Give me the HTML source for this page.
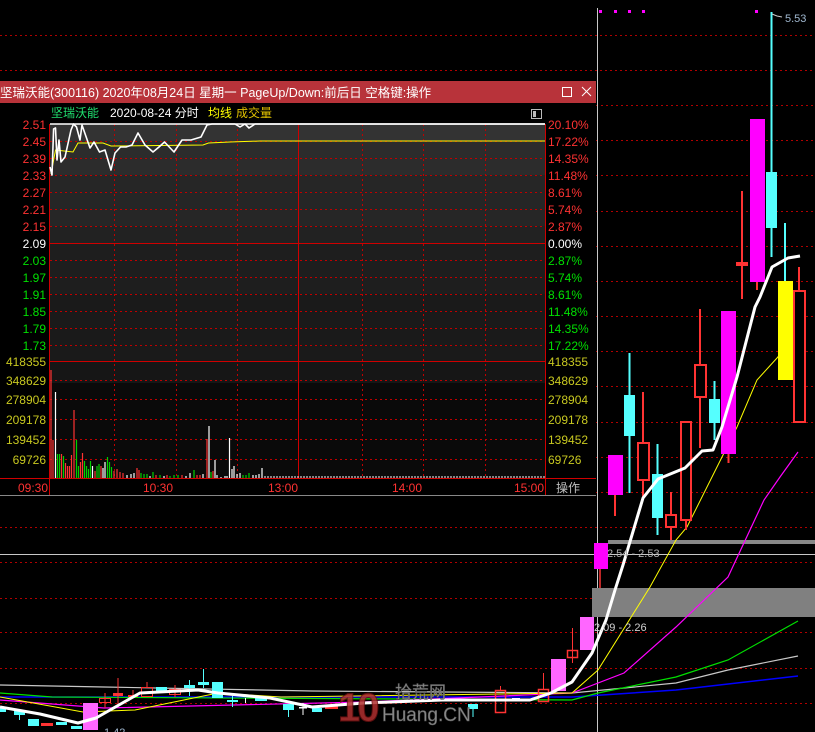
<!DOCTYPE html>
<html><head><meta charset="utf-8"><style>
html,body{margin:0;padding:0;background:#000;width:815px;height:732px;overflow:hidden}
svg{display:block}
text{font-family:"Liberation Sans","Noto Sans CJK SC",sans-serif}
</style></head><body>
<svg width="815" height="732" viewBox="0 0 815 732" xmlns="http://www.w3.org/2000/svg">
<rect width="815" height="732" fill="#000"/>
<g stroke="#b00000" stroke-width="1" stroke-dasharray="2,3">
<line x1="0" y1="35.5" x2="815" y2="35.5"/><line x1="0" y1="70.5" x2="815" y2="70.5"/>
<line x1="596" y1="105.5" x2="815" y2="105.5"/><line x1="596" y1="140.5" x2="815" y2="140.5"/>
<line x1="596" y1="175.5" x2="815" y2="175.5"/><line x1="596" y1="211.5" x2="815" y2="211.5"/>
<line x1="596" y1="246.5" x2="815" y2="246.5"/><line x1="596" y1="281.5" x2="815" y2="281.5"/>
<line x1="596" y1="316.5" x2="815" y2="316.5"/><line x1="596" y1="351.5" x2="815" y2="351.5"/>
<line x1="596" y1="386.5" x2="815" y2="386.5"/><line x1="596" y1="422.5" x2="815" y2="422.5"/>
<line x1="596" y1="457.5" x2="815" y2="457.5"/><line x1="596" y1="492.5" x2="815" y2="492.5"/>
<line x1="0" y1="527.5" x2="815" y2="527.5"/><line x1="0" y1="562.5" x2="815" y2="562.5"/>
<line x1="0" y1="598.5" x2="815" y2="598.5"/><line x1="0" y1="632.5" x2="815" y2="632.5"/>
<line x1="0" y1="668.5" x2="815" y2="668.5"/><line x1="0" y1="703.5" x2="815" y2="703.5"/>
</g>
<g fill="#ff00ff"><rect x="599" y="10" width="3" height="3"/><rect x="614" y="10" width="3" height="3"/><rect x="628" y="10" width="3" height="3"/><rect x="642" y="10" width="3" height="3"/><rect x="755" y="10" width="3" height="3"/></g>
<line x1="597.5" y1="8" x2="597.5" y2="732" stroke="#c8c8c8" stroke-width="1"/>
<rect x="608" y="540" width="207" height="4" fill="#888"/>
<line x1="0" y1="554.5" x2="815" y2="554.5" stroke="#c8c8c8"/>
<rect x="592" y="588" width="223" height="29" fill="#808080"/>

<g fill="none">
<polyline stroke="#c8c8c8" stroke-width="1.2" points="0,685 104,687 312,691 572,693 676,683 728,670 798,656"/>
<polyline stroke="#0000ff" stroke-width="1.5" points="0,697 312,697 572,697 676,690 798,676"/>
<polyline stroke="#00e000" stroke-width="1.2" points="0,693 52,697 572,700 598,693 676,677 728,660 798,621"/>
<polyline stroke="#ff00ff" stroke-width="1.2" points="0,700 104,708 364,702 572,693 624,673 676,627 728,577 764,500 780,477 798,452"/>
<polyline stroke="#ffff00" stroke-width="1" points="0,697 83,712 135,710 218,693 281,697 572,693 598,670 650,587 676,540 687,527 737,427 757,380 777,358 798,333"/>
</g>

<g>
<rect x="0" y="707" width="6" height="5" fill="#55ffff"/>
<rect x="14" y="710" width="11" height="5" fill="#55ffff"/><line x1="19.5" y1="710" x2="19.5" y2="720" stroke="#55ffff"/>
<rect x="28" y="719" width="11" height="7" fill="#55ffff"/>
<rect x="41" y="723" width="12" height="3" fill="#ff3333"/>
<rect x="56" y="722" width="11" height="3" fill="#55ffff"/>
<rect x="71" y="726" width="11" height="3" fill="#55ffff"/>
<rect x="99.5" y="698.5" width="11" height="4" fill="none" stroke="#ff3333"/><line x1="105" y1="693" x2="105" y2="708" stroke="#ff3333"/>
<rect x="113" y="693" width="10" height="3" fill="#ff3333"/><line x1="118" y1="678" x2="118" y2="705" stroke="#ff3333"/>
<rect x="128" y="695" width="10" height="2" fill="#ff3333"/><line x1="133" y1="690" x2="133" y2="697" stroke="#ff3333"/>
<rect x="141.5" y="687.5" width="11" height="9" fill="none" stroke="#ff3333"/><line x1="147" y1="682" x2="147" y2="688" stroke="#ff3333"/>
<rect x="156" y="687" width="11" height="6" fill="#55ffff"/>
<rect x="169.5" y="689.5" width="11" height="5" fill="none" stroke="#ff3333"/><line x1="175" y1="685" x2="175" y2="697" stroke="#ff3333"/>
<rect x="184" y="685" width="11" height="3" fill="#55ffff"/><line x1="189.5" y1="680" x2="189.5" y2="696" stroke="#55ffff"/>
<rect x="198" y="682" width="11" height="3" fill="#55ffff"/><line x1="203.5" y1="669" x2="203.5" y2="688" stroke="#55ffff"/>
<rect x="212" y="682" width="11" height="16" fill="#55ffff"/>
<rect x="227" y="700" width="11" height="2" fill="#55ffff"/><line x1="232.5" y1="696" x2="232.5" y2="707" stroke="#55ffff"/>
<line x1="245.5" y1="698" x2="245.5" y2="703" stroke="#fff"/>
<rect x="255" y="698" width="12" height="3" fill="#55ffff"/>
<rect x="283" y="704" width="11" height="6" fill="#55ffff"/><line x1="288.5" y1="704" x2="288.5" y2="717" stroke="#55ffff"/>
<rect x="299" y="707" width="8" height="1.5" fill="#fff"/><line x1="303" y1="703" x2="303" y2="715" stroke="#fff"/>
<rect x="312" y="708" width="10" height="4" fill="#55ffff"/>
<rect x="325" y="706" width="13" height="3" fill="#ff3333"/>
<rect x="468" y="704" width="10" height="5" fill="#55ffff"/><line x1="473" y1="704" x2="473" y2="717" stroke="#55ffff"/>
<rect x="495.5" y="690.5" width="10" height="22" fill="none" stroke="#ff3333" stroke-width="1.5"/><line x1="500.5" y1="686" x2="500.5" y2="691" stroke="#ff3333"/>
<rect x="512" y="698" width="8" height="1.5" fill="#fff"/>
<rect x="538.5" y="689.5" width="10" height="12" fill="none" stroke="#ff3333" stroke-width="1.5"/><line x1="543.5" y1="673" x2="543.5" y2="690" stroke="#ff3333"/>
<rect x="551" y="659" width="15" height="32" fill="#ff66ff"/>
<rect x="567.5" y="650.5" width="10" height="7" fill="none" stroke="#ff3333" stroke-width="1.5"/><line x1="572.5" y1="628" x2="572.5" y2="663" stroke="#ff3333"/>
<rect x="580" y="617" width="14" height="33" fill="#ff66ff"/>
<line x1="600" y1="560" x2="600" y2="588" stroke="#ff3333" stroke-width="1.5"/>
<rect x="594" y="543" width="14" height="26" fill="#ff00ff"/>
<rect x="83" y="703" width="15" height="27" fill="#ff66ff"/>
</g>

<g stroke-width="2">
<line x1="615" y1="495" x2="615" y2="516" stroke="#ff3333"/>
<rect x="608" y="455" width="15" height="40" fill="#ff00ff"/>
<line x1="629.5" y1="353" x2="629.5" y2="493" stroke="#55ffff"/>
<rect x="624" y="395" width="11" height="41" fill="#55ffff"/>
<line x1="643" y1="392" x2="643" y2="500" stroke="#ff3333"/>
<rect x="638" y="443" width="11" height="37" fill="#000" stroke="#ff3333"/>
<line x1="657.5" y1="444" x2="657.5" y2="535" stroke="#55ffff"/>
<rect x="652" y="474" width="11" height="44" fill="#55ffff"/>
<line x1="671" y1="492" x2="671" y2="540" stroke="#ff3333"/>
<rect x="666" y="515" width="10" height="12" fill="#000" stroke="#ff3333"/>
<line x1="686" y1="520" x2="686" y2="530" stroke="#ff3333"/>
<rect x="681" y="422" width="10" height="98" fill="#000" stroke="#ff3333"/>
<line x1="700" y1="309" x2="700" y2="448" stroke="#ff3333"/>
<rect x="695" y="365" width="11" height="32" fill="#000" stroke="#ff3333"/>
<line x1="714.5" y1="381" x2="714.5" y2="440" stroke="#55ffff"/>
<rect x="709" y="399" width="11" height="24" fill="#55ffff"/>
<line x1="728.5" y1="440" x2="728.5" y2="463" stroke="#ff3333"/>
<rect x="721" y="311" width="15" height="143" fill="#ff00ff"/>
<line x1="742" y1="191" x2="742" y2="299" stroke="#ff3333"/>
<rect x="736" y="262" width="12" height="4" fill="#ff3333" stroke="none"/>
<line x1="757" y1="270" x2="757" y2="290" stroke="#ff3333"/>
<rect x="750" y="119" width="15" height="163" fill="#ff00ff" stroke="none"/>
<line x1="771.5" y1="12" x2="771.5" y2="257" stroke="#55ffff"/>
<rect x="766" y="172" width="11" height="56" fill="#55ffff" stroke="none"/>
<line x1="785" y1="223" x2="785" y2="282" stroke="#55ffff"/>
<rect x="778" y="281" width="15" height="99" fill="#ffff00" stroke="none"/>
<line x1="799" y1="267" x2="799" y2="292" stroke="#ff3333"/>
<rect x="794" y="291" width="11" height="131" fill="#000" stroke="#ff3333"/>
</g>
<polyline fill="none" stroke="#fff" stroke-width="3" stroke-linejoin="round" points="0,707 40,714 78,723 96,718 140,693 198,690 218,693 270,698 312,707 364,703 442,700 530,700 551,693 572,682 592,653 606,620 615,590 623,565 643,498 658,479 685,468 702,451 713,450 722,427 737,377 755,307 760,297 772,267 788,258 800,256"/>

<text x="785" y="22" font-size="11" fill="#a0b8d0">5.53</text>
<polyline points="772,14 777,16 782,17" fill="none" stroke="#ccc"/>
<text x="607" y="557" font-size="11" fill="#b0b0b0">2.54 - 2.53</text>
<text x="594" y="631" font-size="11" fill="#d0d0d0">2.09 - 2.26</text>
<text x="104" y="736" font-size="11" fill="#a0b8d0">1.42</text>

<text x="338" y="721" font-size="40" font-weight="bold" fill="#b03030" stroke="#6a1010" stroke-width="1" opacity="0.85" letter-spacing="-3">10</text>
<text x="395" y="698" font-size="17" fill="#8a8a8a" stroke="#555" stroke-width="0.5">拾荒网</text>
<text x="382" y="721" font-size="19" fill="#8a8a8a" stroke="#555" stroke-width="0.5">Huang.CN</text>

<rect x="0" y="81" width="596" height="415" fill="#000"/>
<rect x="0" y="81" width="596" height="22" fill="#b8333a"/>
<text x="0" y="97" font-size="12.5" fill="#fff">坚瑞沃能(300116) 2020年08月24日 星期一 PageUp/Down:前后日 空格键:操作</text>
<rect x="562.5" y="87.5" width="9" height="9" fill="none" stroke="#fff"/>
<path d="M582 87 L591 96 M591 87 L582 96" stroke="#fff" stroke-width="1"/>
<text x="51" y="117" font-size="12" fill="#20e070">坚瑞沃能</text>
<text x="110" y="117" font-size="12" fill="#fff">2020-08-24 分时</text>
<text x="208" y="117" font-size="12" fill="#ffff00">均线</text>
<text x="236" y="117" font-size="12" fill="#e0c000">成交量</text>
<rect x="531.5" y="109.5" width="10" height="9" fill="none" stroke="#bbb"/><rect x="533" y="111" width="3" height="6" fill="#bbb"/>

<rect x="50" y="124" width="495" height="17" fill="#333"/>
<rect x="50" y="141" width="495" height="34" fill="#2c2c2c"/>
<rect x="50" y="175" width="495" height="51" fill="#262626"/>
<rect x="50" y="226" width="495" height="17" fill="#222"/>
<rect x="50" y="243" width="495" height="51" fill="#1e1e1e"/>
<rect x="50" y="294" width="495" height="67" fill="#1a1a1a"/>
<rect x="50" y="361" width="495" height="22" fill="#161616"/>
<rect x="50" y="383" width="495" height="95" fill="#0a0a0a"/>
<g stroke="#c00000" stroke-dasharray="2,3">
<line x1="50" y1="141.5" x2="545" y2="141.5"/><line x1="50" y1="158.5" x2="545" y2="158.5"/><line x1="50" y1="175.5" x2="545" y2="175.5"/>
<line x1="50" y1="192.5" x2="545" y2="192.5"/><line x1="50" y1="209.5" x2="545" y2="209.5"/><line x1="50" y1="226.5" x2="545" y2="226.5"/>
<line x1="50" y1="260.5" x2="545" y2="260.5"/><line x1="50" y1="277.5" x2="545" y2="277.5"/><line x1="50" y1="294.5" x2="545" y2="294.5"/>
<line x1="50" y1="311.5" x2="545" y2="311.5"/><line x1="50" y1="328.5" x2="545" y2="328.5"/><line x1="50" y1="345.5" x2="545" y2="345.5"/>
<line x1="50" y1="380.5" x2="545" y2="380.5"/><line x1="50" y1="399.5" x2="545" y2="399.5"/><line x1="50" y1="419.5" x2="545" y2="419.5"/>
<line x1="50" y1="439.5" x2="545" y2="439.5"/><line x1="50" y1="459.5" x2="545" y2="459.5"/>
<line x1="114.5" y1="124" x2="114.5" y2="478"/><line x1="176.5" y1="124" x2="176.5" y2="478"/><line x1="237.5" y1="124" x2="237.5" y2="478"/>
<line x1="362.5" y1="124" x2="362.5" y2="478"/><line x1="423.5" y1="124" x2="423.5" y2="478"/><line x1="485.5" y1="124" x2="485.5" y2="478"/>
</g>
<g stroke="#d00000" stroke-width="1">
<line x1="50" y1="243.5" x2="545" y2="243.5"/><line x1="50" y1="361.5" x2="545" y2="361.5"/>
<line x1="298.5" y1="124" x2="298.5" y2="478"/>
<line x1="49.5" y1="124" x2="49.5" y2="496"/><line x1="545.5" y1="124" x2="545.5" y2="496"/>
<line x1="0" y1="478.5" x2="596" y2="478.5"/>
</g>
<line x1="0" y1="495.5" x2="596" y2="495.5" stroke="#888"/>
<line x1="50" y1="124" x2="545" y2="124" stroke="#fff" stroke-width="1.5"/>

<g stroke-width="1.2">
<line x1="51" y1="478" x2="51" y2="370" stroke="#ff3333"/>
<line x1="53" y1="478" x2="53" y2="440" stroke="#ff3333"/>
<line x1="55.5" y1="478" x2="55.5" y2="392" stroke="#fff"/>
<line x1="57.5" y1="478" x2="57.5" y2="454" stroke="#00d000"/>
<line x1="59.5" y1="478" x2="59.5" y2="454" stroke="#00d000"/>
<line x1="61.5" y1="478" x2="61.5" y2="454" stroke="#ff3333"/>
<line x1="63.5" y1="478" x2="63.5" y2="456" stroke="#00d000"/>
<line x1="65.5" y1="478" x2="65.5" y2="463" stroke="#ff3333"/>
<line x1="67.5" y1="478" x2="67.5" y2="466" stroke="#ff3333"/>
<line x1="69.5" y1="478" x2="69.5" y2="466" stroke="#ff3333"/>
<line x1="71.5" y1="478" x2="71.5" y2="455" stroke="#ff3333"/>
<line x1="74" y1="478" x2="74" y2="410" stroke="#ff3333"/>
<line x1="76.5" y1="478" x2="76.5" y2="440" stroke="#00d000"/>
<line x1="78.5" y1="478" x2="78.5" y2="466" stroke="#00d000"/>
<line x1="80.5" y1="478" x2="80.5" y2="462" stroke="#ff3333"/>
<line x1="82.5" y1="478" x2="82.5" y2="453" stroke="#ff3333"/>
<line x1="84.5" y1="478" x2="84.5" y2="461" stroke="#00d000"/>
<line x1="86.5" y1="478" x2="86.5" y2="466" stroke="#00d000"/>
<line x1="88.5" y1="478" x2="88.5" y2="469" stroke="#00d000"/>
<line x1="90.5" y1="478" x2="90.5" y2="461" stroke="#00d000"/>
<line x1="92.5" y1="478" x2="92.5" y2="466" stroke="#fff"/>
<line x1="95" y1="478" x2="95" y2="471" stroke="#ff3333"/>
<line x1="97" y1="478" x2="97" y2="466" stroke="#00d000"/>
<line x1="99" y1="478" x2="99" y2="464" stroke="#00d000"/>
<line x1="101" y1="478" x2="101" y2="466" stroke="#ff3333"/>
<line x1="103" y1="478" x2="103" y2="468" stroke="#fff"/>
<line x1="105" y1="478" x2="105" y2="462" stroke="#fff"/>
<line x1="107.5" y1="478" x2="107.5" y2="457" stroke="#00d000"/>
<line x1="109.5" y1="478" x2="109.5" y2="462" stroke="#00d000"/>
<line x1="111.5" y1="478" x2="111.5" y2="467" stroke="#00d000"/>
<line x1="114" y1="478" x2="114" y2="471" stroke="#ff3333"/>
<line x1="117" y1="478" x2="117" y2="469" stroke="#ff3333"/>
<line x1="120" y1="478" x2="120" y2="472" stroke="#ff3333"/>
<line x1="123" y1="478" x2="123" y2="473" stroke="#ff3333"/>
<line x1="127" y1="478" x2="127" y2="475" stroke="#fff"/>
<line x1="131" y1="478" x2="131" y2="474" stroke="#fff"/>
<line x1="134" y1="478" x2="134" y2="473" stroke="#fff"/>
<line x1="137" y1="478" x2="137" y2="468" stroke="#ff3333"/>
<line x1="139" y1="478" x2="139" y2="470" stroke="#ff3333"/>
<line x1="141" y1="478" x2="141" y2="473" stroke="#00d000"/>
<line x1="144" y1="478" x2="144" y2="474" stroke="#00d000"/>
<line x1="147" y1="478" x2="147" y2="474" stroke="#00d000"/>
<line x1="150" y1="478" x2="150" y2="476" stroke="#fff"/>
<line x1="153" y1="478" x2="153" y2="472" stroke="#00d000"/>
<line x1="156" y1="478" x2="156" y2="475" stroke="#ff3333"/>
<line x1="160" y1="478" x2="160" y2="475" stroke="#00d000"/>
<line x1="164" y1="478" x2="164" y2="476" stroke="#fff"/>
<line x1="167" y1="478" x2="167" y2="475" stroke="#ff3333"/>
<line x1="170" y1="478" x2="170" y2="476" stroke="#00d000"/>
<line x1="174" y1="478" x2="174" y2="475" stroke="#00d000"/>
<line x1="178" y1="478" x2="178" y2="475" stroke="#00d000"/>
<line x1="182" y1="478" x2="182" y2="475" stroke="#ff3333"/>
<line x1="186" y1="478" x2="186" y2="476" stroke="#fff"/>
<line x1="190" y1="478" x2="190" y2="473" stroke="#fff"/>
<line x1="194" y1="478" x2="194" y2="470" stroke="#00d000"/>
<line x1="197" y1="478" x2="197" y2="475" stroke="#ff3333"/>
<line x1="200" y1="478" x2="200" y2="475" stroke="#ff3333"/>
<line x1="203" y1="478" x2="203" y2="474" stroke="#fff"/>
<line x1="207" y1="478" x2="207" y2="439" stroke="#ff3333"/>
<line x1="209" y1="478" x2="209" y2="426" stroke="#fff"/>
<line x1="211" y1="478" x2="211" y2="472" stroke="#00d000"/>
<line x1="213" y1="478" x2="213" y2="471" stroke="#ff3333"/>
<line x1="215" y1="478" x2="215" y2="460" stroke="#fff"/>
<line x1="217" y1="478" x2="217" y2="475" stroke="#fff"/>
<line x1="221" y1="478" x2="221" y2="477" stroke="#fff"/>
<line x1="225" y1="478" x2="225" y2="476" stroke="#fff"/>
<line x1="227" y1="478" x2="227" y2="476" stroke="#fff"/>
<line x1="229.5" y1="478" x2="229.5" y2="438" stroke="#fff"/>
<line x1="232" y1="478" x2="232" y2="469" stroke="#fff"/>
<line x1="234" y1="478" x2="234" y2="466" stroke="#fff"/>
<line x1="237" y1="478" x2="237" y2="474" stroke="#fff"/>
<line x1="240" y1="478" x2="240" y2="473" stroke="#fff"/>
<line x1="243" y1="478" x2="243" y2="475" stroke="#00d000"/>
<line x1="246" y1="478" x2="246" y2="475" stroke="#00d000"/>
<line x1="249" y1="478" x2="249" y2="473" stroke="#00d000"/>
<line x1="253" y1="478" x2="253" y2="475" stroke="#fff"/>
<line x1="256" y1="478" x2="256" y2="475" stroke="#fff"/>
<line x1="259" y1="478" x2="259" y2="474" stroke="#fff"/>
<line x1="262" y1="478" x2="262" y2="468" stroke="#fff"/>
</g>
<line x1="264" y1="477" x2="545" y2="477" stroke="#fff" stroke-width="1" stroke-dasharray="2,1"/>

<polyline fill="none" stroke="#ffff00" stroke-width="1" points="51,174 55.5,150 73,152 78,143 103,143 111,146 203,145 208.5,143 230,142 260,141 545,141"/>
<polyline fill="none" stroke="#fff" stroke-width="1.6" stroke-linejoin="round" points="50,167 52,175 53.6,129 55.5,128 57,160 59,140 61,162 65,157 71,130 73.5,124 76.5,127 80,140 82,125 90,148 94,142 99.5,152 105,150 111,170 115,153 120.5,147 126,147 132,145 138,133 145,145 153,152 159,147 164.5,142 174,152 182,140 191,140 201,137 207,125 212,124 235,124 240,127 245,124 249,128 255,124 545,124"/>

<g font-size="12" text-anchor="end">
<text x="46" y="129" fill="#ff3232">2.51</text><text x="46" y="146" fill="#ff3232">2.45</text>
<text x="46" y="163" fill="#ff3232">2.39</text><text x="46" y="180" fill="#ff3232">2.33</text>
<text x="46" y="197" fill="#ff3232">2.27</text><text x="46" y="214" fill="#ff3232">2.21</text>
<text x="46" y="231" fill="#ff3232">2.15</text><text x="46" y="248" fill="#fff">2.09</text>
<text x="46" y="265" fill="#00e000">2.03</text><text x="46" y="282" fill="#00e000">1.97</text>
<text x="46" y="299" fill="#00e000">1.91</text><text x="46" y="316" fill="#00e000">1.85</text>
<text x="46" y="333" fill="#00e000">1.79</text><text x="46" y="350" fill="#00e000">1.73</text>
<text x="46" y="366" fill="#c8c820">418355</text><text x="46" y="385" fill="#c8c820">348629</text>
<text x="46" y="404" fill="#c8c820">278904</text><text x="46" y="424" fill="#c8c820">209178</text>
<text x="46" y="444" fill="#c8c820">139452</text><text x="46" y="464" fill="#c8c820">69726</text>
</g>
<g font-size="12">
<text x="548" y="129" fill="#ff3232">20.10%</text><text x="548" y="146" fill="#ff3232">17.22%</text>
<text x="548" y="163" fill="#ff3232">14.35%</text><text x="548" y="180" fill="#ff3232">11.48%</text>
<text x="548" y="197" fill="#ff3232">8.61%</text><text x="548" y="214" fill="#ff3232">5.74%</text>
<text x="548" y="231" fill="#ff3232">2.87%</text><text x="548" y="248" fill="#fff">0.00%</text>
<text x="548" y="265" fill="#00e000">2.87%</text><text x="548" y="282" fill="#00e000">5.74%</text>
<text x="548" y="299" fill="#00e000">8.61%</text><text x="548" y="316" fill="#00e000">11.48%</text>
<text x="548" y="333" fill="#00e000">14.35%</text><text x="548" y="350" fill="#00e000">17.22%</text>
<text x="548" y="366" fill="#c8c820">418355</text><text x="548" y="385" fill="#c8c820">348629</text>
<text x="548" y="404" fill="#c8c820">278904</text><text x="548" y="424" fill="#c8c820">209178</text>
<text x="548" y="444" fill="#c8c820">139452</text><text x="548" y="464" fill="#c8c820">69726</text>
<text x="18" y="492" fill="#ff3232">09:30</text><text x="143" y="492" fill="#ff3232">10:30</text>
<text x="268" y="492" fill="#ff3232">13:00</text><text x="392" y="492" fill="#ff3232">14:00</text>
<text x="514" y="492" fill="#ff3232">15:00</text><text x="556" y="492" fill="#c0c0c0">操作</text>
</g>
</svg>
</body></html>
